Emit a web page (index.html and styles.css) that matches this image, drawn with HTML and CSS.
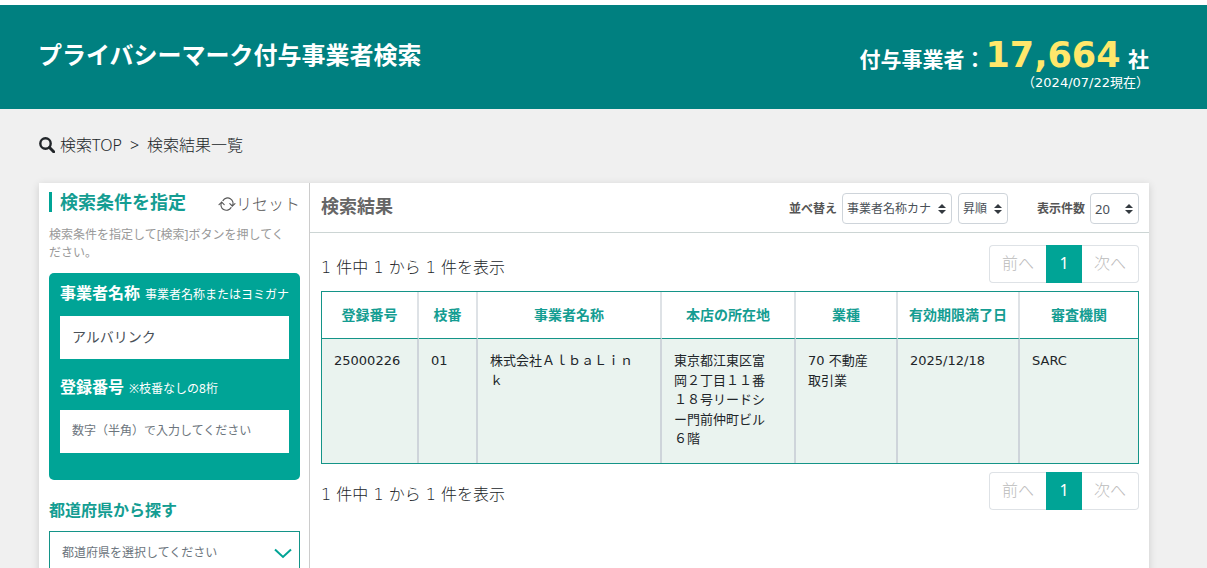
FILE: index.html
```html
<!DOCTYPE html>
<html lang="ja">
<head>
<meta charset="utf-8">
<meta name="viewport" content="width=device-width, initial-scale=1">
<title>プライバシーマーク付与事業者検索</title>
<link rel="stylesheet" href="styles.css">
</head>
<body>
<header class="site-header">
  <h1 class="site-title">プライバシーマーク付与事業者検索</h1>
  <div class="total">
    <p class="total-line">付与事業者：<strong class="total-number">17,664</strong> 社</p>
    <p class="total-date">（2024/07/22現在）</p>
  </div>
</header>

<nav class="breadcrumb">
  <svg class="icon-search" viewBox="0 0 16 16" aria-hidden="true"><circle cx="6.5" cy="6.5" r="5.2" fill="none" stroke="currentColor" stroke-width="2.4"/><path d="M10.5 10.5l4.2 4.2" stroke="currentColor" stroke-width="3" stroke-linecap="round"/></svg>
  <a href="#">検索TOP</a><span class="separator">&gt;</span><span>検索結果一覧</span>
</nav>

<main class="panel">
  <aside class="sidebar">
    <div class="sidebar-head">
      <h2 class="sidebar-title">検索条件を指定</h2>
      <button class="reset" type="button"><svg class="icon-reset" viewBox="0 0 18 14" fill="none" stroke="currentColor" stroke-width="1.1" stroke-linecap="round" stroke-linejoin="round" aria-hidden="true"><path d="M5 3.600A5.300 5.300 0 0 1 14.300 9M13 10.600A5.300 5.300 0 0 1 3.700 5.200"/><path d="M11.800 6.600l2.500 2.400 2.700-2.400M1 7.600l2.700-2.400 2.500 2.400"/></svg>リセット</button>
    </div>
    <p class="hint">検索条件を指定して[検索]ボタンを押してください。</p>
    <form class="search-box">
      <label class="field-label" for="company"><b>事業者名称</b>事業者名称またはヨミガナ</label>
      <input class="field-input" id="company" type="text" value="アルバリンク">
      <label class="field-label" for="number"><b>登録番号</b>※枝番なしの8桁</label>
      <input class="field-input field-small" id="number" type="text" placeholder="数字（半角）で入力してください">
    </form>
    <label class="prefecture-label" for="prefecture">都道府県から探す</label>
    <div class="select-wrap">
      <select class="prefecture" id="prefecture"><option>都道府県を選択してください</option></select>
      <svg class="chevron" viewBox="0 0 18 11" aria-hidden="true"><path d="M1 1.500l8 7.500 8-7.500" fill="none" stroke="currentColor" stroke-width="2"/></svg>
    </div>
  </aside>

  <section class="results">
    <div class="results-head">
      <h2 class="results-title">検索結果</h2>
      <div class="controls">
        <label for="sort">並べ替え</label>
        <div class="select-wrap">
          <select class="mini sort-key" id="sort"><option>事業者名称カナ</option></select>
          <svg class="updown" viewBox="0 0 8 10" aria-hidden="true"><path d="M4 0l4 4H0zM4 10L0 6h8z" fill="currentColor"/></svg>
        </div>
        <div class="select-wrap">
          <select class="mini sort-order" aria-label="並び順"><option>昇順</option></select>
          <svg class="updown" viewBox="0 0 8 10" aria-hidden="true"><path d="M4 0l4 4H0zM4 10L0 6h8z" fill="currentColor"/></svg>
        </div>
        <label class="count-label" for="count">表示件数</label>
        <div class="select-wrap">
          <select class="mini page-count" id="count"><option>20</option></select>
          <svg class="updown" viewBox="0 0 8 10" aria-hidden="true"><path d="M4 0l4 4H0zM4 10L0 6h8z" fill="currentColor"/></svg>
        </div>
      </div>
    </div>

    <div class="results-body">
      <div class="pager-row">
        <p class="summary">1 件中 1 から 1 件を表示</p>
        <div class="pager"><button type="button" class="page" disabled>前へ</button><button type="button" class="page current">1</button><button type="button" class="page" disabled>次へ</button></div>
      </div>
      <table class="grid">
        <colgroup><col class="c-number"><col class="c-branch"><col class="c-name"><col class="c-address"><col class="c-industry"><col class="c-expiry"><col class="c-agency"></colgroup>
        <thead>
          <tr><th>登録番号</th><th>枝番</th><th>事業者名称</th><th>本店の所在地</th><th>業種</th><th>有効期限満了日</th><th>審査機関</th></tr>
        </thead>
        <tbody>
          <tr><td>25000226</td><td>01</td><td>株式会社ＡｌｂａＬｉｎｋ</td><td>東京都江東区富岡２丁目１１番１８号リードシー門前仲町ビル６階</td><td>70 不動産取引業</td><td>2025/12/18</td><td>SARC</td></tr>
        </tbody>
      </table>
      <div class="pager-row">
        <p class="summary">1 件中 1 から 1 件を表示</p>
        <div class="pager"><button type="button" class="page" disabled>前へ</button><button type="button" class="page current">1</button><button type="button" class="page" disabled>次へ</button></div>
      </div>
    </div>
  </section>
</main>
</body>
</html>
```
FILE: styles.css
```css
* { box-sizing: border-box; }

body {
  margin: 0;
  padding-top: 5px;
  background: linear-gradient(#fff 5px, #f0f0f0 5px);
  color: #212529;
  font: 16px/24px "Noto Sans", "Noto Sans CJK JP", sans-serif;
}

h1, h2, p { margin: 0; }
button, input, select { font: inherit; }

.site-header {
  display: flex;
  justify-content: space-between;
  height: 104px;
  padding: 32px 58px 0 38px;
  background: #008080;
  color: #fff;
}
.site-title { font-size: 24px; line-height: 36px; }
.total-line {
  font-size: 21px;
  font-weight: 700;
  line-height: 36px;
}
.total-number {
  margin-right: 2px;
  color: #ffe76b;
  font-family: "DejaVu Sans", sans-serif;
  font-size: 35px;
}
.total-date {
  margin-top: -4px;
  font-family: "DejaVu Sans", "Noto Sans CJK JP", sans-serif;
  font-size: 13px;
  line-height: 20px;
  text-align: right;
}

.breadcrumb {
  display: flex;
  align-items: center;
  padding: 24px 39px 26px;
  font-weight: 300;
}
.breadcrumb a { color: inherit; text-decoration: none; }
.icon-search { width: 16px; height: 16px; margin-right: 5px; }
.separator { margin: 0 8px; }

.panel {
  display: flex;
  min-height: 640px;
  margin: 0 58px 40px 39px;
  background: #fff;
  box-shadow: 0 2px 8px rgba(0, 0, 0, 0.15);
}

.sidebar {
  flex: 0 0 270px;
  padding: 8px 9px 8px 10px;
  border-right: 1px solid #ccc;
}
.sidebar-head {
  display: flex;
  align-items: flex-start;
  justify-content: space-between;
}
.sidebar-title {
  margin-top: 1px;
  padding-left: 8px;
  border-left: 3px solid #00a496;
  color: #149d92;
  font-size: 18px;
  line-height: 20px;
}
.reset {
  display: flex;
  align-items: center;
  padding: 0;
  border: 0;
  background: none;
  color: #555;
  font-weight: 300;
  line-height: 26px;
}
.icon-reset { width: 18px; height: 14px; }
.hint {
  margin: 9px 0 11px;
  padding-right: 8px;
  color: #999;
  font-size: 12px;
  line-height: 18px;
}
.search-box {
  padding: 8px 11px 27px;
  border-radius: 5px;
  background: #00a496;
}
.field-label {
  display: flex;
  align-items: baseline;
  color: #fff;
  font-size: 12px;
  line-height: 24px;
  white-space: nowrap;
}
.field-label b { margin-right: 5px; font-size: 16px; }
.field-input {
  display: block;
  width: 100%;
  height: 43px;
  margin: 9px 0 16px;
  padding: 0 12px 4px;
  border: 0;
  background: #fff;
  color: #495057;
  font-size: 14px;
}
.field-small { margin-bottom: 0; padding-bottom: 2px; font-size: 12px; }
.field-input::placeholder { color: #6c757d; opacity: 1; }
.prefecture-label {
  display: block;
  margin: 18px 0 9px;
  color: #149d92;
  font-weight: 700;
}

.select-wrap { position: relative; }
.select-wrap svg { position: absolute; pointer-events: none; }
select { appearance: none; background: #fff; color: #495057; }
.prefecture {
  width: 100%;
  height: 44px;
  padding: 0 12px;
  border: 1px solid #149488;
  border-radius: 0;
  color: #6c757d;
  font-size: 12px;
}
.chevron {
  top: 17px;
  right: 8px;
  width: 18px;
  height: 11px;
  color: #00a496;
}

.results { flex: 1; min-width: 0; }
.results-head {
  display: flex;
  align-items: center;
  justify-content: space-between;
  height: 50px;
  padding: 2px 10px 0 11px;
  border-bottom: 1px solid #ccd5d4;
}
.results-title { margin-top: -6px; color: #666; font-size: 18px; }
.controls {
  display: flex;
  align-items: center;
  gap: 6px;
  color: #555;
  font-size: 12px;
  font-weight: 700;
}
.controls > label + .select-wrap { margin-left: -1px; }
.count-label { margin-left: 23px; }
.mini {
  display: block;
  height: 31px;
  padding: 0 4px;
  border: 1px solid #ced4da;
  border-radius: 4px;
  font-size: 12px;
  font-weight: 400;
}
.sort-key { width: 110px; }
.sort-order { width: 50px; }
.page-count { width: 49px; font-size: 13px; }
.updown {
  top: 11px;
  right: 6px;
  width: 8px;
  height: 10px;
  color: #343a40;
}

.results-body { padding: 12px 10px 12px 11px; }
.pager-row {
  display: flex;
  align-items: flex-start;
  justify-content: space-between;
}
.summary {
  padding-top: 11px;
  font-family: "DejaVu Sans", "Noto Sans CJK JP", sans-serif;
  font-weight: 300;
}
.pager { display: flex; }
.page {
  height: 38px;
  padding: 0 12px 2px;
  border: 1px solid #dee2e6;
  background: #fff;
  color: #bbb;
  font-weight: 300;
}
.page:first-child { border-right: 0; border-radius: 4px 0 0 4px; }
.page:last-child { border-left: 0; border-radius: 0 4px 4px 0; }
.page.current {
  width: 36px;
  border-color: #00a496;
  background: #00a496;
  color: #fff;
  font-weight: 400;
}

.grid {
  width: 100%;
  margin: 8px 0;
  border: 1px solid #149488;
  border-spacing: 0;
  table-layout: fixed;
  font-family: "DejaVu Sans", "Noto Sans CJK JP", sans-serif;
}
.c-number { width: 97px; }
.c-branch { width: 59px; }
.c-address { width: 134px; }
.c-industry { width: 102px; }
.c-expiry { width: 122px; }
.c-agency { width: 118px; }
.grid th {
  height: 47px;
  padding: 0;
  border-right: 2px solid #dee2e6;
  border-bottom: 1px solid #149488;
  color: #149d92;
  font-size: 14px;
  white-space: nowrap;
}
.grid td {
  height: 124px;
  padding: 12px 20px 12px 12px;
  border-right: 2px solid #ced4da;
  background: #eaf3ef;
  font-size: 13px;
  line-height: 1.5;
  line-break: loose;
  vertical-align: top;
}
.grid th:last-child, .grid td:last-child { border-right: 0; }
```
